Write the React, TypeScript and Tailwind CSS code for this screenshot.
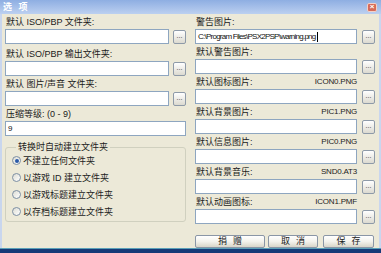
import React from 'react';

const FONT = "font-[family-name:'Liberation_Sans','Noto_Sans_CJK_SC',sans-serif]";

const DotsButton: React.FC = () => (
  <button className="w-[13px] h-[14px] flex items-center justify-center rounded-[2px] border border-[#8e9aa8] bg-gradient-to-b from-white to-[#dcdad0] text-[7px] leading-none text-[#333] pb-[2px]">
    ...
  </button>
);

const TextBox: React.FC<{ value?: string; w: string; caret?: boolean }> = ({ value, w, caret }) => (
  <div className={`${w} h-[15px] bg-white border border-[#8ea6c0] flex items-center pl-[2px] overflow-hidden`}>
    {value && <span className="text-[8px] tracking-[-0.75px] text-[#111] whitespace-nowrap">{value}</span>}
    {caret && <span className="w-px h-[10px] bg-black ml-px" />}
  </div>
);

const PathRow: React.FC<{ label: string; file?: string; value?: string; caret?: boolean; side: 'left' | 'right' }> = ({
  label,
  file,
  value,
  caret,
  side,
}) => {
  const inputW = side === 'left' ? 'w-[164px]' : 'w-[162px]';
  const gap = side === 'left' ? 'gap-[4px]' : 'gap-[5px]';
  return (
    <div className="flex flex-col">
      <div className={`h-[15px] flex items-end justify-between pb-[2px] pl-px ${inputW}`}>
        <span className="text-[9px] leading-[10px] text-[#1a1a1a]">{label}</span>
        {file && <span className="text-[8px] leading-[10px] tracking-[-0.2px] text-[#222]">{file}</span>}
      </div>
      <div className={`flex items-center ${gap}`}>
        <TextBox w={inputW} value={value} caret={caret} />
        <DotsButton />
      </div>
    </div>
  );
};

const Radio: React.FC<{ label: string; checked?: boolean }> = ({ label, checked }) => (
  <div className="h-[17px] flex items-center gap-[2px]">
    <span className="w-[9px] h-[9px] rounded-full border border-[#7d8fa3] bg-gradient-to-br from-[#dcdcd4] to-white flex items-center justify-center">
      {checked && <span className="w-[4px] h-[4px] rounded-full bg-[#2a5aa8]" />}
    </span>
    <span className="text-[9px] leading-[10px] text-[#222]">{label}</span>
  </div>
);

const DlgButton: React.FC<{ label: string; w: string }> = ({ label, w }) => (
  <button className={`${w} h-[13px] rounded-[2px] border border-[#8a96a6] bg-gradient-to-b from-white via-[#f3f2ec] to-[#d8d5c8] text-[9px] leading-none text-[#222] tracking-[6px] pl-[6px] flex items-center justify-center`}>
    {label}
  </button>
);

export default function App() {
  return (
    <div className={`w-[381px] h-[253px] flex flex-col bg-[#ece9d8] overflow-hidden text-black ${FONT}`}>
      {/* Title bar */}
      <div className="h-[14px] flex items-center justify-between bg-gradient-to-b from-[#8eaee2] to-[#bcd0f0] px-[3px]">
        <span className="text-[9px] leading-none font-bold text-white tracking-[2px]">选 项</span>
        <span className="w-[10px] h-[9px] mr-px rounded-[2px] bg-[#d66a58] border border-[#f2d0c8] flex items-center justify-center text-white text-[8px] leading-none font-bold">
          ×
        </span>
      </div>

      <div className="flex-1 flex px-[3px] border-x-2 border-[#c9d6ee]">
        {/* Left column */}
        <div className="w-[181px] flex flex-col">
          <PathRow side="left" label="默认 ISO/PBP 文件夹:" />
          <div className="mt-[2px]">
            <PathRow side="left" label="默认 ISO/PBP 输出文件夹:" />
          </div>
          <PathRow side="left" label="默认 图片/声音 文件夹:" />
          <div className="flex flex-col">
            <div className="h-[15px] flex items-end pb-[2px] pl-px">
              <span className="text-[9px] leading-[10px] text-[#1a1a1a]">压缩等级: (0 - 9)</span>
            </div>
            <TextBox w="w-[181px]" value="9" />
          </div>
          <fieldset className="mt-[6px] border border-[#d0d0bf] rounded-[3px] pl-[6px] pb-px">
            <legend className="ml-[4px] px-[2px] text-[9px] leading-[10px] text-[#222]">转换时自动建立文件夹</legend>
            <Radio label="不建立任何文件夹" checked />
            <Radio label="以游戏 ID 建立文件夹" />
            <Radio label="以游戏标题建立文件夹" />
            <Radio label="以存档标题建立文件夹" />
          </fieldset>
        </div>

        {/* Right column */}
        <div className="ml-[9px] w-[180px] flex flex-col">
          <PathRow side="right" label="警告图片:" value="C:\Program Files\PSX2PSP\warning.png" caret />
          <PathRow side="right" label="默认警告图片:" />
          <PathRow side="right" label="默认图标图片:" file="ICON0.PNG" />
          <PathRow side="right" label="默认背景图片:" file="PIC1.PNG" />
          <PathRow side="right" label="默认信息图片:" file="PIC0.PNG" />
          <PathRow side="right" label="默认背景音乐:" file="SND0.AT3" />
          <PathRow side="right" label="默认动画图标:" file="ICON1.PMF" />
          <div className="mt-[11px] flex">
            <DlgButton label="捐赠" w="w-[70px]" />
            <div className="ml-[3px]">
              <DlgButton label="取消" w="w-[50px]" />
            </div>
            <div className="ml-[5px]">
              <DlgButton label="保存" w="w-[51px]" />
            </div>
          </div>
        </div>
      </div>

      {/* Bottom frame */}
      <div className="h-[5px] border-t border-[#5aa0b8] bg-[#163a78]" />
    </div>
  );
}
